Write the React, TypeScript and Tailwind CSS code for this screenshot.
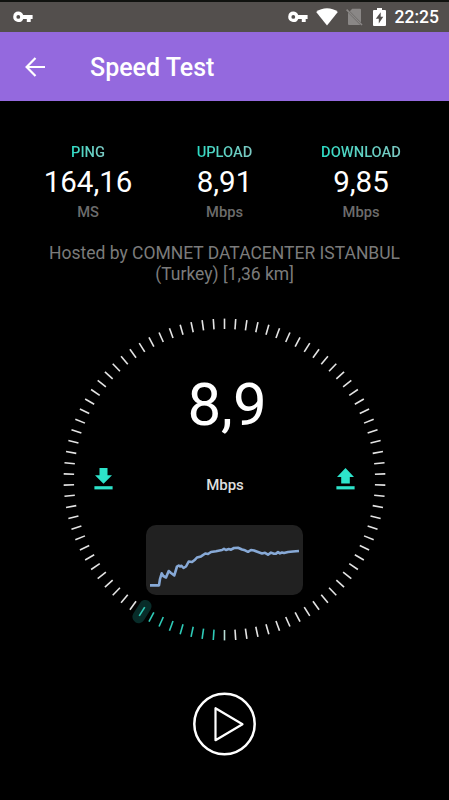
import React from "react";

const stats = [
  { label: "PING", value: "164,16", unit: "MS", width: "w-[136px]" },
  { label: "UPLOAD", value: "8,91", unit: "Mbps", width: "w-[137px]" },
  { label: "DOWNLOAD", value: "9,85", unit: "Mbps", width: "w-[136px]" },
];

function KeyIcon() {
  return (
    <svg width="20" height="12" viewBox="0 0 20 12" fill="#fff" className="shrink-0">
      <path
        fillRule="evenodd"
        d="M5.3 .6a5.2 5.2 0 0 1 4.9 3.5H19.6V7.9H17.7V11H13.8V7.9H10.2A5.2 5.2 0 1 1 5.3 .6ZM5.3 4a1.9 1.9 0 1 0 0 3.8a1.9 1.9 0 0 0 0-3.8Z"
      />
    </svg>
  );
}

function StatusBar() {
  return (
    <div className="flex h-8 items-center border-t-2 border-[#10120f] bg-[#534f4d] pl-[13px] pr-[10px]">
      <KeyIcon />
      <div className="ml-auto flex items-center">
        <KeyIcon />
        <svg width="22" height="18" viewBox="0 0 22 18" fill="#fff" className="ml-[8px]">
          <path d="M11 17.6 .2 4C6.2-.9 15.8-.9 21.8 4Z" />
        </svg>
        <svg width="17" height="18" viewBox="0 0 17 18" className="ml-[8px]">
          <path d="M6.2 .8H14a1 1 0 0 1 1 1V14.4L3.8 3.2ZM2 4.6 14.4 17H3a1 1 0 0 1-1-1Z" fill="#8a8786" />
          <path d="M.6 1.6 16 17" stroke="#8a8786" strokeWidth="1.6" />
        </svg>
        <svg width="13" height="18" viewBox="0 0 13 18" className="ml-[10px]">
          <path d="M4 0H9V2H12a1 1 0 0 1 1 1V17a1 1 0 0 1-1 1H1a1 1 0 0 1-1-1V3a1 1 0 0 1 1-1H4Z" fill="#fff" />
          <path d="M7.7 4.2 2.8 10.8H5.8V15.4L10.3 8.8H7.7Z" fill="#534f4d" />
        </svg>
        <span className="ml-[9px] pt-[2px] text-[17.5px] font-medium leading-none text-white">22:25</span>
      </div>
    </div>
  );
}

function Ticks() {
  return (
    <>
      {Array.from({ length: 90 }, (_, i) => (
        <line
          key={i}
          x1="164.5"
          y1="3.6"
          x2="164.5"
          y2="14"
          transform={`rotate(${i * 4} 164.5 164.5)`}
          stroke={i > 45 && i <= 53 ? "#2fcbb8" : i === 45 ? "#b9ddd6" : "#e4e4e4"}
          strokeWidth="1.6"
        />
      ))}
    </>
  );
}

function Transfer({ up }: { up?: boolean }) {
  return (
    <svg width="19" height="23" viewBox="0 0 19 23" fill="#2de3ca">
      <path d={up ? "M9.5 0 18 8.9H13.8V15.5H5.2V8.9H1Z" : "M5.5 0H13.5V7.2H18L9.5 15.8 1 7.2H5.5Z"} />
      <path d="M.4 18.2H18.6V21.4H.4Z" />
    </svg>
  );
}

function Graph() {
  return (
    <div className="h-[70px] w-[157px] rounded-[10px] bg-[#212121]">
      <svg width="157" height="70" viewBox="0 0 157 70" fill="none">
        <path
          d="M4 60.4H13L14 54 15.7 48.3 17.3 51 20 52.5 22.7 46 25 48 28.3 50.4 31 41.5 32.7 40.5 34 41.5 35.5 40.8 37.5 43 40 41.5 42.7 36.5 46 37 49 34.7 51 32.5 55 31.4 59.3 28.5 62 29 65 27 70 26.2 76 25 78 23.8 80 25 82.7 24 85 24.7 88 23 92 22.7 96 24.5 99 25.3 102 26.8 105 25 108 25.5 112 27 116 28.5 119 27.8 122 29.7 125 27.6 128 28.8 130 28.6 132 27.1 134 28.4 136 27.5 138 28 142 27 147 26.5 153 26"
          stroke="#87a9d6"
          strokeWidth="2.6"
          strokeLinejoin="round"
        />
      </svg>
    </div>
  );
}

function Dial() {
  return (
    <section className="mx-auto grid h-[329px] w-[329px] shrink-0">
      <svg width="329" height="329" viewBox="0 0 329 329" className="col-start-1 row-start-1">
        <line x1="164.5" y1="2.5" x2="164.5" y2="15.1" transform="rotate(212 164.5 164.5)" stroke="#082c29" strokeWidth="12.5" strokeLinecap="round" />
        <Ticks />
      </svg>
      <div className="col-start-1 row-start-1 flex flex-col items-center">
        <div className="mt-[59px] pl-[5px] text-[60px] leading-[62px] text-white">8,9</div>
        <div className="mt-[32px] flex w-[261px] items-start justify-between">
          <Transfer />
          <span className="mt-[7px] pl-px text-[15px] font-medium leading-[20px] text-[#dedede]">Mbps</span>
          <Transfer up />
        </div>
        <div className="mt-[29.5px]">
          <Graph />
        </div>
      </div>
    </section>
  );
}

export default function App() {
  return (
    <div className="flex h-[800px] w-[449px] flex-col overflow-hidden bg-black font-['Roboto',sans-serif]">
      <StatusBar />
      <header className="flex h-[69px] shrink-0 items-center bg-[#9469de] pl-[25px] pt-px">
        <svg width="21" height="20" viewBox="0 0 21 20" fill="none" stroke="#fff" strokeWidth="2.2">
          <path d="M20 10H2M10.5 1 1.6 10 10.5 19" />
        </svg>
        <h1 className="ml-[44px] pt-[2px] text-[25px] font-medium leading-[32px] text-white">Speed Test</h1>
      </header>
      <section className="flex h-[130px] shrink-0 justify-center pt-[42px]">
        {stats.map((stat) => (
          <div key={stat.label} className={`${stat.width} flex flex-col items-center`}>
            <span className="bg-linear-to-r from-[#27dcc5] to-[#7bc8c2] bg-clip-text text-[14.7px] font-medium leading-[18px] text-transparent">
              {stat.label}
            </span>
            <span className="mt-[3px] text-[29.5px] leading-[36px] text-white">{stat.value}</span>
            <span className="mt-[3px] text-[14.7px] font-medium leading-[18px] text-[#6c6c6c]">{stat.unit}</span>
          </div>
        ))}
      </section>
      <p className="mt-[12px] h-[72px] shrink-0 text-center text-[17.5px] leading-[20.5px] text-[#7b7b7b]">
        Hosted by COMNET DATACENTER ISTANBUL
        <br />
        (Turkey) [1,36 km]
      </p>
      <Dial />
      <button className="mx-auto mt-[48px] h-[64px] w-[64px] shrink-0" aria-label="Start test">
        <svg width="64" height="64" viewBox="0 0 64 64" fill="none" stroke="#fff">
          <circle cx="31.5" cy="32" r="30.2" strokeWidth="2.5" />
          <path d="M22.5 16.2V48.2L49.5 32.2Z" strokeWidth="2.2" strokeLinejoin="round" />
        </svg>
      </button>
    </div>
  );
}
